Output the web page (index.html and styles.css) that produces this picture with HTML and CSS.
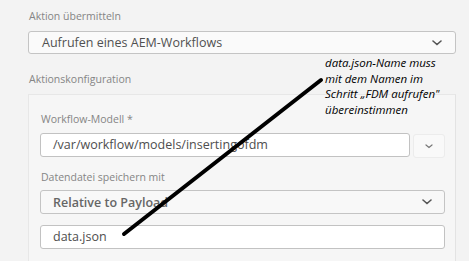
FILE: index.html
```html
<!DOCTYPE html>
<html lang="de">
<head>
    <meta charset="UTF-8">
    <title>Aktion übermitteln</title>
    <link rel="stylesheet" href="styles.css">
</head>
<body>
    <div class="page">
        <label class="field-label top-label">Aktion übermitteln</label>
        <div class="select select-wide">
            <span>Aufrufen eines AEM-Workflows</span>
            <svg class="chevron" width="10" height="6" viewBox="0 0 10 6"><path d="M1 1 L5 4.5 L9 1" fill="none" stroke="#555" stroke-width="1.6" stroke-linecap="round"/></svg>
        </div>

        <label class="field-label section-label">Aktionskonfiguration</label>
        <div class="panel">
            <label class="field-label">Workflow-Modell *</label>
            <div class="combo">
                <div class="input">/var/workflow/models/insertingofdm</div>
                <div class="combo-btn">
                    <svg width="8" height="5" viewBox="0 0 8 5"><path d="M1 1 L4 3.5 L7 1" fill="none" stroke="#777" stroke-width="1.2" stroke-linecap="round"/></svg>
                </div>
            </div>

            <label class="field-label">Datendatei speichern mit</label>
            <div class="select select-inner">
                <span>Relative to Payload</span>
                <svg class="chevron" width="10" height="6" viewBox="0 0 10 6"><path d="M1 1 L5 4.5 L9 1" fill="none" stroke="#555" stroke-width="1.6" stroke-linecap="round"/></svg>
            </div>
            <div class="input input-full">data.json</div>
        </div>

        <div class="note">data.json-Name muss<br>mit dem Namen im<br>Schritt „FDM aufrufen"<br>übereinstimmen</div>
        <svg class="arrow" width="469" height="261" viewBox="0 0 469 261">
            <line x1="124" y1="234" x2="321" y2="80" stroke="#000" stroke-width="4" stroke-linecap="round"/>
        </svg>
    </div>
</body>
</html>
```

FILE: styles.css
```css
body {
    margin: 0;
    background: #f3f3f3;
    font-family: "Open Sans", "Noto Sans", sans-serif;
    color: #4b4b4b;
}

.page {
    position: relative;
    width: 469px;
    height: 261px;
    overflow: hidden;
    padding: 10px 13px 0 28px;
    box-sizing: border-box;
}

.field-label {
    display: block;
    font-size: 10.5px;
    color: #858585;
    line-height: 13px;
}

.top-label {
    margin-left: 1px;
}

.select {
    display: flex;
    align-items: center;
    justify-content: space-between;
    border: 1px solid #c4c4c4;
    border-radius: 3px;
    background: #fafafa;
    box-sizing: border-box;
    font-size: 12.5px;
    color: #505050;
}

.select-wide {
    margin-top: 8px;
    height: 23px;
    padding: 0 13px 0 13px;
}

.section-label {
    margin-top: 19px;
    margin-left: 1px;
}

.panel {
    margin-top: 8px;
    padding: 18px 10px 20px 11px;
    border: 1px solid #e7e7e7;
    border-right-color: #e3e3e3;
    background: #f6f6f6;
    height: 200px;
    box-sizing: border-box;
}

.panel .field-label {
    font-size: 10.5px;
    margin-left: 1px;
}

.combo {
    display: flex;
    gap: 3px;
    margin-top: 7px;
    margin-bottom: 13px;
}

.input {
    height: 24px;
    line-height: 22px;
    box-sizing: border-box;
    border: 1px solid #c2c2c2;
    border-radius: 3px;
    background: #fff;
    padding: 0 12px;
    font-size: 12.5px;
    color: #4e4e4e;
}

.combo .input {
    flex: 1;
}

.combo-btn {
    width: 30px;
    height: 22px;
    margin-top: 1px;
    border: 1px solid #ececec;
    border-radius: 3px;
    background: #f9f9f9;
    display: flex;
    align-items: center;
    justify-content: center;
}

.select-inner {
    margin-top: 6px;
    height: 24px;
    padding: 0 12px;
    background: #f8f8f8;
    font-weight: 600;
    color: #666;
}

.input-full {
    margin-top: 11px;
}

.note {
    position: absolute;
    left: 325px;
    top: 55px;
    font-family: "Open Sans", sans-serif;
    font-style: italic;
    font-size: 11.5px;
    line-height: 15.5px;
    color: #000;
}

.arrow {
    position: absolute;
    left: 0;
    top: 0;
}
```
